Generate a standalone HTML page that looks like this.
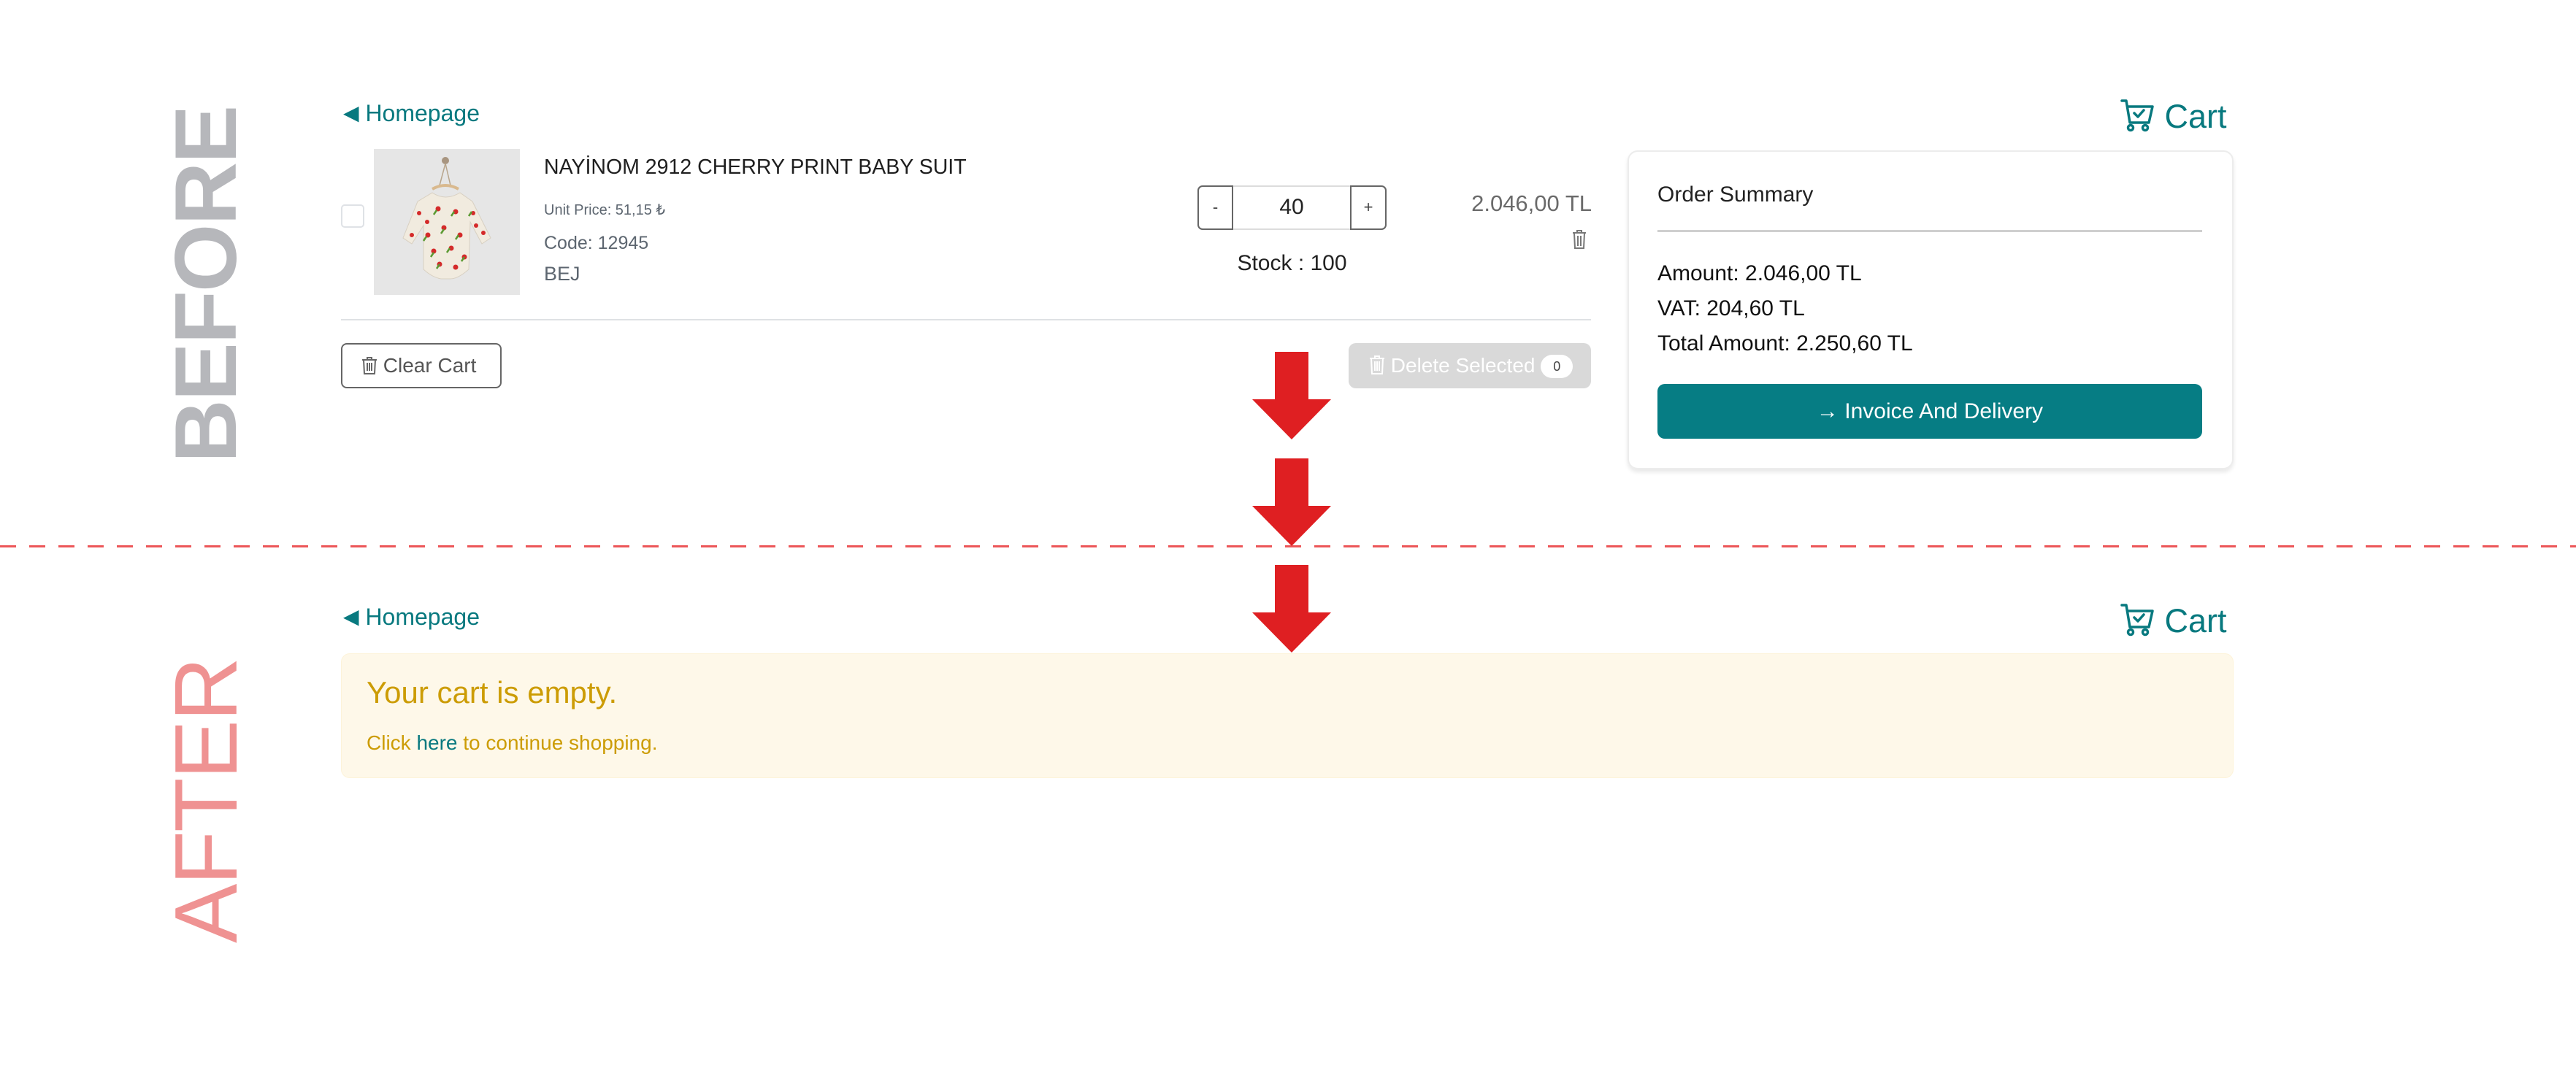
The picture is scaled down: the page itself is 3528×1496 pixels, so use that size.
<!DOCTYPE html>
<html><head><meta charset="utf-8"><style>
*{margin:0;padding:0;box-sizing:border-box}
body{width:3528px;height:1496px;background:#fff;position:relative;overflow:hidden;font-family:"Liberation Sans",sans-serif}
.a{position:absolute;white-space:nowrap}
.teal{color:#08797f}
.vt{position:absolute;font-weight:bold;font-size:120px;transform:translate(-50%,-50%) rotate(-90deg);line-height:1;letter-spacing:-2px}
.arrow{position:absolute;left:1715px;width:108px}
.tri{font-size:28px;position:relative;top:-2px}
</style></head><body>

<div class="vt" style="left:282px;top:390px;color:#b6b7bb">BEFORE</div>
<div class="vt" style="left:282px;top:1097px;color:#ef9292;font-weight:normal;font-size:122px">AFTER</div>

<!-- BEFORE -->
<div class="a teal" style="left:470px;top:136px;font-size:32px;line-height:38px"><span class="tri">&#9664;</span> Homepage</div>
<div class="a teal" style="left:2904px;top:134px;font-size:45px;line-height:52px">
<svg width="48" height="46" viewBox="0 0 48 46" style="vertical-align:-6px"><g fill="none" stroke="#08797f" stroke-width="3.5" stroke-linecap="round" stroke-linejoin="round"><path d="M2 3h6l5 30h26l5-22H10"/><path d="M19 20l5 5 8-9"/><circle cx="14" cy="40" r="3.5"/><circle cx="34" cy="40" r="3.5"/></g></svg> Cart</div>

<div class="a" style="left:467px;top:280px;width:32px;height:32px;border:2px solid #dfe2e6;border-radius:5px"></div>
<svg class="a" style="left:512px;top:204px" width="200" height="200" viewBox="0 0 200 200">
<rect width="200" height="200" fill="#e6e6e6"/>
<circle cx="98" cy="16" r="5" fill="#a89580"/>
<path d="M98 20 L90 50 M98 20 L105 50" stroke="#b8a58c" stroke-width="1.5" fill="none"/>
<path d="M80 55 Q98 45 116 55" stroke="#d9b98e" stroke-width="4" fill="none"/>
<path d="M80 60 Q98 72 118 60 L135 72 L160 122 L148 130 L132 100 L130 165 Q115 178 105 178 L92 178 Q80 176 68 165 L68 105 L52 130 L40 122 L60 72 Z" fill="#f1ebdf" stroke="#d8d0c2" stroke-width="1"/>
<g fill="#d42a2a"><circle cx="88" cy="82" r="3.5"/><circle cx="112" cy="86" r="3.5"/><circle cx="74" cy="118" r="3.5"/><circle cx="96" cy="108" r="3.5"/><circle cx="118" cy="118" r="3.5"/><circle cx="82" cy="140" r="3.5"/><circle cx="106" cy="136" r="3.5"/><circle cx="124" cy="148" r="3.5"/><circle cx="90" cy="158" r="3.5"/><circle cx="112" cy="162" r="3.5"/><circle cx="62" cy="88" r="3"/><circle cx="136" cy="88" r="3"/><circle cx="52" cy="118" r="3"/><circle cx="150" cy="115" r="3"/><circle cx="140" cy="105" r="3"/><circle cx="73" cy="100" r="3"/></g>
<g stroke="#5a9a32" stroke-width="2.5"><path d="M82 90l4-6M106 92l4-6M68 126l4-6M92 116l4-6M112 124l4-6M78 148l4-6M100 142l4-6M120 154l4-6M86 164l4-6M130 92l4-6"/></g>
</svg>
<div class="a" style="left:745px;top:212px;font-size:28.5px;color:#1e1e1e;line-height:34px">NAYİNOM 2912 CHERRY PRINT BABY SUIT</div>
<div class="a" style="left:745px;top:275px;font-size:20px;color:#5d6670">Unit Price: 51,15 ₺</div>
<div class="a" style="left:745px;top:319px;font-size:25px;color:#5d6670">Code: 12945</div>
<div class="a" style="left:745px;top:360px;font-size:27px;color:#5d6670">BEJ</div>

<div class="a" style="left:1640px;top:254px;width:259px;height:61px;border:2px solid #dcdcdc;border-radius:7px"></div>
<div class="a" style="left:1640px;top:254px;width:49px;height:61px;border:2px solid #666;border-radius:7px 0 0 7px;font-size:22px;text-align:center;line-height:56px;color:#444">-</div>
<div class="a" style="left:1849px;top:254px;width:50px;height:61px;border:2px solid #666;border-radius:0 7px 7px 0;font-size:22px;text-align:center;line-height:56px;color:#444">+</div>
<div class="a" style="left:1689px;top:264px;width:160px;text-align:center;font-size:30px;color:#222;line-height:40px">40</div>
<div class="a" style="left:1640px;top:342px;width:259px;text-align:center;font-size:30px;color:#222;line-height:38px">Stock : 100</div>
<div class="a" style="left:1900px;top:260px;width:280px;text-align:right;font-size:31px;color:#6a6a6a;line-height:38px">2.046,00 TL</div>
<svg class="a" style="left:2152px;top:314px" width="22" height="28" viewBox="0 0 22 28"><g fill="none" stroke="#777" stroke-width="2"><path d="M2 5h18M8 5V2h6v3M4 5l1 21h12l1-21M9 9v14M13 9v14"/></g></svg>

<div class="a" style="left:467px;top:437px;width:1712px;height:2px;background:#dfe1e4"></div>

<div class="a" style="left:467px;top:470px;width:220px;height:62px;border:2px solid #666;border-radius:8px;font-size:28px;color:#555;line-height:58px;padding-left:26px">
<svg width="22" height="24" viewBox="0 0 22 24" style="vertical-align:-3px"><g fill="none" stroke="#666" stroke-width="2"><path d="M1 4h20M8 4V1h6v3M3 4l1 19h14l1-19M8 8v11M11 8v11M14 8v11"/></g></svg> Clear Cart</div>

<div class="a" style="left:1847px;top:470px;width:332px;height:62px;background:#d9d9d9;border-radius:10px;font-size:28px;color:#fff;line-height:62px;padding-left:28px">
<svg width="22" height="26" viewBox="0 0 22 26" style="vertical-align:-3px"><g fill="none" stroke="#fff" stroke-width="2"><path d="M1 4h20M8 4V1h6v3M3 4l1 21h14l1-21M8 8v13M11 8v13M14 8v13"/></g></svg> Delete Selected <span style="display:inline-block;background:#fff;color:#444;border-radius:16px;width:44px;height:32px;font-size:18px;line-height:32px;text-align:center;vertical-align:2px">0</span></div>

<div class="a" style="left:2229px;top:206px;width:830px;height:437px;border:2px solid #ececec;border-radius:14px;box-shadow:0 4px 6px rgba(0,0,0,0.09)"></div>
<div class="a" style="left:2270px;top:248px;font-size:30px;color:#222;line-height:38px">Order Summary</div>
<div class="a" style="left:2270px;top:315px;width:746px;height:3px;background:#cfcfcf"></div>
<div class="a" style="left:2270px;top:356px;font-size:30px;color:#111;line-height:38px">Amount: 2.046,00 TL</div>
<div class="a" style="left:2270px;top:404px;font-size:30px;color:#111;line-height:38px">VAT: 204,60 TL</div>
<div class="a" style="left:2270px;top:452px;font-size:30px;color:#111;line-height:38px">Total Amount: 2.250,60 TL</div>
<div class="a" style="left:2270px;top:526px;width:746px;height:75px;background:#067d84;border-radius:10px;color:#fff;font-size:30px;text-align:center;line-height:75px">&#8594; Invoice And Delivery</div>

<!-- arrows -->
<svg class="arrow" style="top:482px" height="120" viewBox="0 0 108 120"><path d="M31 0h46v65h31L54 120 0 65h31z" fill="#df1f22"/></svg>
<svg class="arrow" style="top:628px" height="120" viewBox="0 0 108 120"><path d="M31 0h46v65h31L54 120 0 65h31z" fill="#df1f22"/></svg>
<svg class="arrow" style="top:774px" height="120" viewBox="0 0 108 120"><path d="M31 0h46v65h31L54 120 0 65h31z" fill="#df1f22"/></svg>

<div class="a" style="left:0;top:747px;width:3528px;height:3px;background:repeating-linear-gradient(90deg,#e8383a 0 22px,transparent 22px 40px);opacity:0.85"></div>

<!-- AFTER -->
<div class="a teal" style="left:470px;top:826px;font-size:32px;line-height:38px"><span class="tri">&#9664;</span> Homepage</div>
<div class="a teal" style="left:2904px;top:825px;font-size:45px;line-height:52px">
<svg width="48" height="46" viewBox="0 0 48 46" style="vertical-align:-6px"><g fill="none" stroke="#08797f" stroke-width="3.5" stroke-linecap="round" stroke-linejoin="round"><path d="M2 3h6l5 30h26l5-22H10"/><path d="M19 20l5 5 8-9"/><circle cx="14" cy="40" r="3.5"/><circle cx="34" cy="40" r="3.5"/></g></svg> Cart</div>

<div class="a" style="left:467px;top:895px;width:2592px;height:171px;background:#fef8e9;border:1px solid #fdf3d9;border-radius:12px"></div>
<div class="a" style="left:502px;top:924px;font-size:42px;color:#cc9c05;line-height:50px">Your cart is empty.</div>
<div class="a" style="left:502px;top:1000px;font-size:28px;color:#cc9c05;line-height:36px">Click <span style="color:#08797f">here</span> to continue shopping.</div>

</body></html>
